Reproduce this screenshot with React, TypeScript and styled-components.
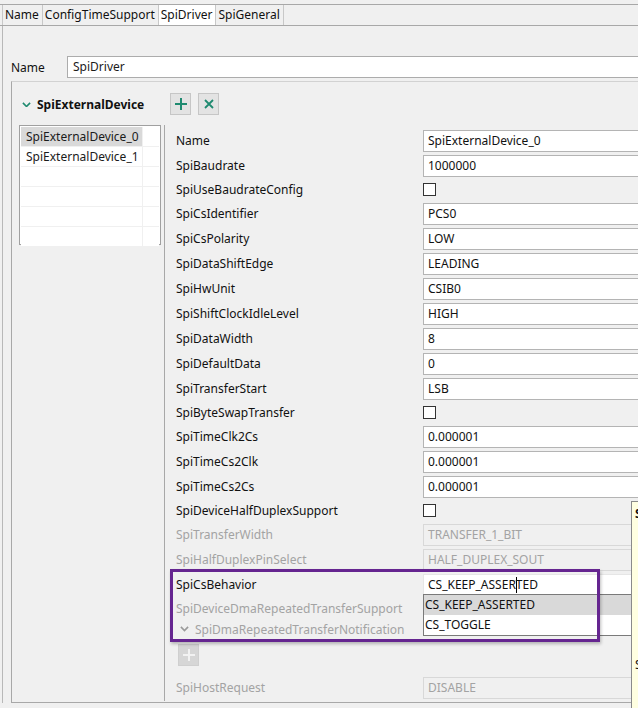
import React from "react";
import styled, { createGlobalStyle } from "styled-components";

const GlobalStyle = createGlobalStyle`
  html, body {
    margin: 0;
    padding: 0;
    overflow: hidden;
    background: #f0f0f0;
  }
  body {
    font-family: "Noto Sans", "Segoe UI", sans-serif;
    font-size: 12px;
    color: #1b1b1b;
  }
`;

type Row =
  | { kind: "input"; label: string; value: string; disabled?: boolean; open?: boolean }
  | { kind: "check"; label: string; disabled?: boolean }
  | { kind: "group"; label: string; disabled?: boolean }
  | { kind: "add"; disabled?: boolean };

const rows: Row[] = [
  { kind: "input", label: "Name", value: "SpiExternalDevice_0" },
  { kind: "input", label: "SpiBaudrate", value: "1000000" },
  { kind: "check", label: "SpiUseBaudrateConfig" },
  { kind: "input", label: "SpiCsIdentifier", value: "PCS0" },
  { kind: "input", label: "SpiCsPolarity", value: "LOW" },
  { kind: "input", label: "SpiDataShiftEdge", value: "LEADING" },
  { kind: "input", label: "SpiHwUnit", value: "CSIB0" },
  { kind: "input", label: "SpiShiftClockIdleLevel", value: "HIGH" },
  { kind: "input", label: "SpiDataWidth", value: "8" },
  { kind: "input", label: "SpiDefaultData", value: "0" },
  { kind: "input", label: "SpiTransferStart", value: "LSB" },
  { kind: "check", label: "SpiByteSwapTransfer" },
  { kind: "input", label: "SpiTimeClk2Cs", value: "0.000001" },
  { kind: "input", label: "SpiTimeCs2Clk", value: "0.000001" },
  { kind: "input", label: "SpiTimeCs2Cs", value: "0.000001" },
  { kind: "check", label: "SpiDeviceHalfDuplexSupport" },
  { kind: "input", label: "SpiTransferWidth", value: "TRANSFER_1_BIT", disabled: true },
  { kind: "input", label: "SpiHalfDuplexPinSelect", value: "HALF_DUPLEX_SOUT", disabled: true },
  { kind: "input", label: "SpiCsBehavior", value: "CS_KEEP_ASSERTED", open: true },
  { kind: "check", label: "SpiDeviceDmaRepeatedTransferSupport", disabled: true },
  { kind: "group", label: "SpiDmaRepeatedTransferNotification", disabled: true },
  { kind: "add", disabled: true },
  { kind: "input", label: "SpiHostRequest", value: "DISABLE", disabled: true },
];

const tabs = ["Name", "ConfigTimeSupport", "SpiDriver", "SpiGeneral"];
const devices = ["SpiExternalDevice_0", "SpiExternalDevice_1", "", "", "", ""];
const csOptions = ["CS_KEEP_ASSERTED", "CS_TOGGLE"];

const Chevron = ({ color, size = 9 }: { color: string; size?: number }) => (
  <svg width={size} height={size * 0.6} viewBox="0 0 10 6">
    <polyline points="1,1 5,5 9,1" fill="none" stroke={color} strokeWidth="1.8" />
  </svg>
);

const PlusIcon = ({ color }: { color: string }) => (
  <svg width="14" height="14" viewBox="0 0 14 14">
    <path d="M7 1v12M1 7h12" stroke={color} strokeWidth="2" />
  </svg>
);

const CrossIcon = ({ color }: { color: string }) => (
  <svg width="12" height="12" viewBox="0 0 12 12">
    <path d="M2 2l8 8M10 2l-8 8" stroke={color} strokeWidth="1.8" />
  </svg>
);

export default function App() {
  return (
    <Root>
      <GlobalStyle />
      <TabStrip>
        {tabs.map((t) => (
          <Tab key={t} $active={t === "SpiDriver"}>{t}</Tab>
        ))}
      </TabStrip>
      <Panel>
        <NameRow>
          <NameLabel>Name</NameLabel>
          <TextBox>SpiDriver</TextBox>
        </NameRow>
        <Section>
          <SectionHeader>
            <HeaderTitle>
              <Chevron color="#1f8a70" />
              <span>SpiExternalDevice</span>
            </HeaderTitle>
            <ToolButton><PlusIcon color="#1f8a70" /></ToolButton>
            <ToolButton><CrossIcon color="#1f8a70" /></ToolButton>
          </SectionHeader>
          <SectionBody>
            <LeftCol>
              <ListBox>
                {devices.map((d, i) => (
                  <ListRow key={i}>
                    <ListCell $selected={i === 0}>{d}</ListCell>
                    <ListCell />
                  </ListRow>
                ))}
              </ListBox>
            </LeftCol>
            <Props>
              {rows.map((r, i) => {
                if (r.kind === "add") {
                  return (
                    <AddRow key={i}>
                      <AddButton><PlusIcon color="#f2f2f2" /></AddButton>
                    </AddRow>
                  );
                }
                if (r.kind === "group") {
                  return (
                    <GroupRow key={i} $disabled={r.disabled}>
                      <Chevron color="#9a9a9a" size={9} />
                      <span>{r.label}</span>
                    </GroupRow>
                  );
                }
                if (r.kind === "check") {
                  return (
                    <PropRow key={i} $h={23}>
                      <PropLabel $disabled={r.disabled}>{r.label}</PropLabel>
                      <CheckBox $disabled={r.disabled} />
                    </PropRow>
                  );
                }
                return (
                  <PropRow key={i} $h={25}>
                    <PropLabel $disabled={r.disabled}>{r.label}</PropLabel>
                    <ValueCell>
                      {r.open ? (
                        <>
                          <ValueBox $open>
                            CS_KEEP_ASSER<Caret />TED
                          </ValueBox>
                          <DropList>
                            {csOptions.map((o, j) => (
                              <DropItem key={o} $hover={j === 0}>{o}</DropItem>
                            ))}
                          </DropList>
                        </>
                      ) : (
                        <ValueBox $disabled={r.disabled}>{r.value}</ValueBox>
                      )}
                    </ValueCell>
                  </PropRow>
                );
              })}
            </Props>
          </SectionBody>
        </Section>
      </Panel>
      <Highlight />
      <Tooltip>
        <TooltipTitle>SpiCsBehavior</TooltipTitle>
        <TooltipText>Specifies the chip select behaviour</TooltipText>
      </Tooltip>
    </Root>
  );
}

const Root = styled.div`
  position: relative;
  width: 680px;
  height: 708px;
  overflow: hidden;
  background: #f0f0f0;
`;

const TabStrip = styled.div`
  margin-top: 4px;
  height: 20px;
  display: flex;
  padding-left: 2px;
  border-top: 1px solid #a8a8a8;
  border-bottom: 1px solid #a8a8a8;
`;

const Tab = styled.div<{ $active?: boolean }>`
  padding: 0 3px 0 2px;
  line-height: 20px;
  border-left: 1px solid #c8c8c8;
  background: ${(p) => (p.$active ? "#ffffff" : "transparent")};
  color: #111;
  &:last-child {
    border-right: 1px solid #c8c8c8;
  }
`;

const Panel = styled.div`
  margin-left: 2px;
  border-left: 1px solid #b8b8b8;
  padding: 30px 0 0 0;
`;

const NameRow = styled.div`
  display: flex;
  align-items: center;
  height: 22px;
`;

const NameLabel = styled.div`
  width: 56px;
  padding-left: 8px;
  color: #111;
`;

const TextBox = styled.div`
  flex: 1;
  height: 22px;
  box-sizing: border-box;
  border: 1px solid #acacac;
  background: #fff;
  padding-left: 5px;
  line-height: 20px;
`;

const Section = styled.div`
  margin: 3px 0 0 8px;
  border-top: 1px solid #d2d2d2;
  border-left: 1px solid #a8a8a8;
  border-bottom: 1px solid #a8a8a8;
  height: 622px;
  box-sizing: border-box;
  padding-top: 11px;
`;

const SectionHeader = styled.div`
  display: flex;
  align-items: center;
  height: 22px;
  gap: 7px;
`;

const HeaderTitle = styled.div`
  width: 151px;
  padding-left: 10px;
  box-sizing: border-box;
  display: flex;
  align-items: center;
  gap: 6px;
  font-weight: bold;
  color: #111;
  svg {
    margin-top: 1px;
  }
`;

const ToolButton = styled.div`
  width: 21px;
  height: 22px;
  box-sizing: border-box;
  border: 1px solid #c6c6c6;
  background: #e3e3e3;
  display: flex;
  align-items: center;
  justify-content: center;
`;

const SectionBody = styled.div`
  display: flex;
  margin-top: 10px;
`;

const LeftCol = styled.div`
  width: 153px;
  flex-shrink: 0;
  padding-left: 7px;
  box-sizing: border-box;
  border-right: 1px solid #a8a8a8;
  height: 576px;
`;

const ListBox = styled.div`
  width: 142px;
  box-sizing: border-box;
  border: 1px solid #a0a0a0;
  background: #fff;
  padding: 1px 1px 0 1px;
  height: 120px;
`;

const ListRow = styled.div`
  display: grid;
  grid-template-columns: 121px 1fr;
  height: 20px;
  border-bottom: 1px solid #f0f0f0;
  box-sizing: border-box;
`;

const ListCell = styled.div<{ $selected?: boolean }>`
  line-height: 19px;
  padding-left: 5px;
  white-space: nowrap;
  background: ${(p) => (p.$selected ? "#d9d9d9" : "#fff")};
  & + & {
    border-left: 1px solid #f0f0f0;
  }
`;

const Props = styled.div`
  flex: 1;
  padding: 3px 0 0 11px;
`;

const PropRow = styled.div<{ $h: number }>`
  display: flex;
  align-items: center;
  height: ${(p) => p.$h}px;
`;

const PropLabel = styled.div<{ $disabled?: boolean }>`
  width: 247px;
  flex-shrink: 0;
  white-space: nowrap;
  color: ${(p) => (p.$disabled ? "#a3a3a3" : "#111")};
`;

const ValueCell = styled.div`
  position: relative;
  flex: 1;
`;

const ValueBox = styled.div<{ $disabled?: boolean; $open?: boolean }>`
  height: 22px;
  box-sizing: border-box;
  border: 1px solid ${(p) => (p.$disabled ? "#d8d8d8" : p.$open ? "#e6e6e6" : "#b4b4b4")};
  background: ${(p) => (p.$disabled ? "#f0f0f0" : "#fff")};
  color: ${(p) => (p.$disabled ? "#a3a3a3" : "#111")};
  padding-left: 4px;
  line-height: 20px;
  white-space: nowrap;
`;

const Caret = styled.span`
  display: inline-block;
  width: 1px;
  height: 16px;
  margin-right: -1px;
  background: #000;
  vertical-align: -4px;
`;

const DropList = styled.div`
  position: absolute;
  left: 0;
  top: 20px;
  right: 0;
  z-index: 2;
  background: #fff;
  border: 1px solid #7a7a7a;
`;

const DropItem = styled.div<{ $hover?: boolean }>`
  height: 20px;
  line-height: 20px;
  padding-left: 1px;
  background: ${(p) => (p.$hover ? "#d9d9d9" : "#fff")};
  color: #111;
`;

const CheckBox = styled.div<{ $disabled?: boolean }>`
  width: 13px;
  height: 13px;
  box-sizing: border-box;
  border: 1px solid ${(p) => (p.$disabled ? "#bdbdbd" : "#333")};
  background: #fff;
`;

const GroupRow = styled.div<{ $disabled?: boolean }>`
  display: flex;
  align-items: center;
  gap: 6px;
  height: 18px;
  padding-left: 4px;
  white-space: nowrap;
  color: ${(p) => (p.$disabled ? "#a3a3a3" : "#111")};
`;

const AddRow = styled.div`
  padding: 6px 0 9px 2px;
`;

const AddButton = styled.div`
  width: 21px;
  height: 22px;
  box-sizing: border-box;
  border: 1px solid #cfcfcf;
  background: #d6d6d6;
  display: flex;
  align-items: center;
  justify-content: center;
`;

const Highlight = styled.div`
  position: absolute;
  left: 170px;
  top: 569px;
  width: 430px;
  height: 73px;
  box-sizing: border-box;
  border: 3px solid #652590;
  box-shadow: 1px 2px 3px rgba(0, 0, 0, 0.25);
  z-index: 3;
  pointer-events: none;
`;

const Tooltip = styled.div`
  position: absolute;
  left: 631px;
  top: 501px;
  width: 260px;
  height: 260px;
  box-sizing: border-box;
  border: 1px solid #8a8a8a;
  background: #ffffe1;
  padding: 3px 3px;
  z-index: 4;
`;

const TooltipTitle = styled.div`
  font-weight: bold;
  color: #111;
`;

const TooltipText = styled.div`
  margin-top: 134px;
  color: #111;
`;
